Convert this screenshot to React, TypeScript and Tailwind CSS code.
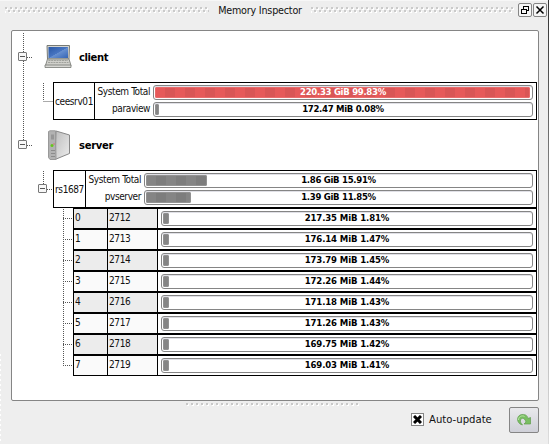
import React from "react";

const ranks = [
  { pid: 2712, usage: "217.35 MiB 1.81%" },
  { pid: 2713, usage: "176.14 MiB 1.47%" },
  { pid: 2714, usage: "173.79 MiB 1.45%" },
  { pid: 2715, usage: "172.26 MiB 1.44%" },
  { pid: 2716, usage: "171.18 MiB 1.43%" },
  { pid: 2717, usage: "171.26 MiB 1.43%" },
  { pid: 2718, usage: "169.75 MiB 1.42%" },
  { pid: 2719, usage: "169.03 MiB 1.41%" },
];

function Meter({ text, fill, red = false, host = false }: { text: string; fill: number; red?: boolean; host?: boolean }) {
  return (
    <div className="relative flex h-[15px] min-w-0 flex-1 items-center rounded-[3px] border border-[#858585] bg-white p-px shadow-[inset_0_1px_0_#e0e0e6]">
      <div
        className={`h-[11px] shrink-0 rounded-[2px] ${
          red
            ? "bg-[repeating-linear-gradient(90deg,#e65a5a_0_10px,#d95656_10px_20px)] shadow-[inset_0_0_0_1px_#e86b6b]"
            : "bg-[repeating-linear-gradient(90deg,#858585_0_10px,#7d7d7d_10px_20px)] shadow-[inset_0_0_0_1px_#929292]"
        }`}
        style={{ width: fill }}
      />
      <span
        className={`absolute inset-0 text-center font-['DejaVu_Sans_Condensed','DejaVu_Sans',sans-serif] text-[9.5px] leading-[12px] font-bold [font-stretch:condensed] ${
          host ? "tracking-[-0.3px]" : "tracking-[-0.12px]"
        } ${red ? "text-white" : "text-black"}`}
      >
        {text}
      </span>
    </div>
  );
}

function HostBox({ name, nameWidth, labelWidth, rows }: {
  name: string;
  nameWidth: string;
  labelWidth: string;
  rows: { label: string; text: string; fill: number; red?: boolean }[];
}) {
  return (
    <div className="ml-[41px] flex h-[38px] w-[484px] border border-black bg-white">
      <div className={`flex shrink-0 items-center justify-center border-r border-black ${nameWidth}`}>{name}</div>
      <div className="flex min-w-0 flex-1 flex-col gap-[2px] pt-[2px] pr-[3px]">
        {rows.map((r) => (
          <div key={r.label} className="flex h-[15px]">
            <div className={`shrink-0 pr-[3px] text-right leading-[14px] whitespace-nowrap ${labelWidth}`}>{r.label}</div>
            <Meter text={r.text} fill={r.fill} red={r.red} host />
          </div>
        ))}
      </div>
    </div>
  );
}

function Grip({ id, width }: { id: string; width: number }) {
  return (
    <svg width={width} height="6" shapeRendering="crispEdges">
      <defs>
        <pattern id={id} width="5" height="6" patternUnits="userSpaceOnUse">
          <path d="M1 1h2v2h-2zM4 4h1v2h-1zM0 4h1v2h-1z" fill="#fff" />
          <path d="M0 0h2v2h-2zM3 3h2v2h-2z" fill="#cacaca" />
        </pattern>
      </defs>
      <rect width={width} height="6" fill={`url(#${id})`} />
    </svg>
  );
}

function Expander({ x, y }: { x: number; y: number }) {
  return (
    <g>
      <rect x={x + 0.5} y={y + 0.5} width="8" height="8" rx="0.5" fill="#f7f7f7" stroke="#777" />
      <path d={`M${x + 2} ${y + 4.5}h5`} stroke="#555" />
    </g>
  );
}

// Dotted branches and fold boxes, in panel coordinates
function Branches() {
  return (
    <svg className="pointer-events-none absolute top-0 left-0" width="64" height="369">
      <g stroke="#555" strokeDasharray="1 1" fill="none">
        <path d="M11.5 2v107M15 26.5h6M15 114.5h6" />
        <path d="M31.5 52v18M31.5 70.5h10M31.5 140v13M35 158.5h6" />
        <path d="M51.5 178v157" />
        {ranks.map((r, i) => (
          <path key={r.pid} d={`M51 ${187.5 + i * 21}h10`} />
        ))}
      </g>
      <Expander x={6} y={21} />
      <Expander x={6} y={109} />
      <Expander x={26} y={153} />
    </svg>
  );
}

function Laptop() {
  return (
    <svg width="28" height="25" viewBox="0 0 28 25">
      <defs>
        <linearGradient id="screen" x1="0" y1="0" x2="1" y2="1">
          <stop offset="0" stopColor="#2957a5" />
          <stop offset=".5" stopColor="#4775c2" />
          <stop offset=".52" stopColor="#6790d0" />
          <stop offset="1" stopColor="#3565b5" />
        </linearGradient>
      </defs>
      <path d="M3 1.5h22.500l-.5 13.500H3.500z" fill="#d5d5d0" stroke="#777a75" />
      <path d="M4.500 3h19.500v11H4.500z" fill="url(#screen)" />
      <path d="M3.500 15h21.500l2 6.500H1.500z" fill="#d0d0cb" stroke="#888a85" />
      <path d="M4.500 16.500h19.500M4 18.500h20.500" stroke="#a0a29d" strokeDasharray="2 .7" />
      <path d="M1 21h26v2.500H1z" fill="#d8d8d4" stroke="#777a75" strokeWidth=".8" />
    </svg>
  );
}

function Tower() {
  return (
    <svg width="24" height="31" viewBox="0 0 24 31">
      <defs>
        <linearGradient id="side" x1="0" y1="0" x2="1" y2="1">
          <stop offset="0" stopColor="#bdbdbd" />
          <stop offset="1" stopColor="#ededed" />
        </linearGradient>
      </defs>
      <path d="M9 1 22.500 5v18.500L8 29.500z" fill="url(#side)" stroke="#888" />
      <path d="M1.500 1.500 3 .8h5.500L9 29.500H3l-1.500-2z" fill="#b2b2b2" stroke="#999" />
      <path d="M4 4.500h3v5H4z" fill="#969696" />
      <path d="M4 20.500h4M4 23.500h4M4 26.500h4" stroke="#8b8b8b" />
      <circle cx="5" cy="15.500" r="1.500" fill="#66c51b" />
      <path d="M7 13v2" stroke="#d66" strokeWidth=".8" />
    </svg>
  );
}

const titleButton =
  "flex h-[14px] w-[14px] items-center justify-center rounded-[2px] border border-[#858585] bg-[#f5f5f5]";

export default function App() {
  return (
    <div className="relative flex h-[444px] w-[549px] flex-col overflow-hidden bg-[#eeeeee] font-['DejaVu_Sans_Condensed','DejaVu_Sans',sans-serif] text-[10px] tracking-[-0.4px] text-[#111] [font-stretch:condensed]">
      <div className="flex h-[30px] shrink-0 items-start border-t border-[#f7f7f7] pl-[5px]">
        <div className="pt-[6px]"><Grip id="gripLeft" width={204} /></div>
        <div className="w-[102px] pt-[2px] text-center font-['DejaVu_Sans',sans-serif] text-[9.6px] tracking-[-0.2px] leading-[15px] whitespace-nowrap [font-stretch:normal]">
          Memory Inspector
        </div>
        <div className="pt-[6px]"><Grip id="gripRight" width={203} /></div>
        <div className="flex gap-px pt-[2px] pl-[4px]">
          <button className={titleButton}>
            <svg width="12" height="12" viewBox="0 0 12 12" className="shrink-0" fill="none" stroke="#000" shapeRendering="crispEdges">
              <path d="M4.500 5V2.500h5v4H8M4 2h6M2.500 5.500h5v4h-5zM2 5h6" />
            </svg>
          </button>
          <button className={titleButton}>
            <svg width="10" height="10" viewBox="0 0 10 10" stroke="#000" strokeWidth="1.500">
              <path d="M1.500 1.500l7 7M8.500 1.500l-7 7" />
            </svg>
          </button>
        </div>
      </div>

      <div className="relative ml-[11px] h-[371px] w-[528px] shrink-0 rounded-[2px] border border-[#858585] bg-white">
        <Branches />
        <div className="flex h-[51px] items-center pl-[32px]">
          <Laptop />
          <span className="mt-px ml-[7px] font-['DejaVu_Sans',sans-serif] text-[10px] tracking-[-0.4px] font-bold text-black [font-stretch:normal]">client</span>
        </div>
        <HostBox
          name="ceesrv01"
          nameWidth="w-[41px]"
          labelWidth="w-[58px]"
          rows={[
            { label: "System Total", text: "220.33 GiB 99.83%", fill: 375, red: true },
            { label: "paraview", text: "172.47 MiB 0.08%", fill: 4 },
          ]}
        />
        <div className="flex h-[50px] items-center pl-[35px]">
          <Tower />
          <span className="ml-[8px] font-['DejaVu_Sans',sans-serif] text-[10px] tracking-[-0.3px] font-bold text-black [font-stretch:normal]">server</span>
        </div>
        <HostBox
          name="rs1687"
          nameWidth="w-[32px]"
          labelWidth="w-[58px]"
          rows={[
            { label: "System Total", text: "1.86 GiB 15.91%", fill: 61 },
            { label: "pvserver", text: "1.39 GiB 11.85%", fill: 45 },
          ]}
        />
        {ranks.map((r, i) => (
          <div key={r.pid} className="ml-[61px] flex h-[21px] w-[464px] border border-black">
            <div className={`w-[34px] border-r border-black pl-px leading-[18px] ${i % 2 ? "bg-[#fafafa]" : "bg-[#ececec]"}`}>{i}</div>
            <div className={`w-[50px] border-r border-black pl-px leading-[18px] ${i % 2 ? "bg-[#fafafa]" : "bg-[#ececec]"}`}>{r.pid}</div>
            <div className="flex flex-1 pt-[2px] pr-[3px] pl-[3px]">
              <Meter text={r.usage} fill={6} />
            </div>
          </div>
        ))}
      </div>

      <div className="flex h-[6px] shrink-0 pt-[2px] pl-[186px]">
        <svg width="174" height="3" shapeRendering="crispEdges">
          <path d="M1 2h173" stroke="#fff" strokeWidth="2" strokeDasharray="2 3" />
          <path d="M0 1h174" stroke="#c8c8c8" strokeWidth="2" strokeDasharray="2 3" />
        </svg>
      </div>
      <div className="flex h-[26px] items-center justify-end pr-[10px]">
        <span className="mr-[5px] mb-px flex h-[13px] w-[13px] items-center justify-center border border-[#858585] bg-white">
          <svg width="9" height="9" viewBox="0 0 9 9" stroke="#000" strokeWidth="3">
            <path d="M1 1l7 7M8 1l-7 7" />
          </svg>
        </span>
        <span className="w-[80px] font-['DejaVu_Sans',sans-serif] text-[10.1px] tracking-normal [font-stretch:normal]">Auto-update</span>
        <button className="flex h-[26px] w-[30px] items-center justify-center rounded-[2px] border border-[#858585] bg-linear-to-b from-[#e9e9ec] to-[#cfd0d8]">
          <svg width="16" height="14" viewBox="0 0 16 14">
            <path d="M6.500 12C0 10.500 0 2 6 1.500c4-.3 5.500 1.500 6 4l2.500-1v6.500H8L10 9C9 5 5.500 4 4.500 7c-.3 2 .5 3.500 2 5z" fill="#79bf62" stroke="#619c4f" strokeWidth=".7" />
            <path d="M2.500 7C2.500 3.500 6 2 8.500 3.500" fill="none" stroke="#b9e5a6" />
          </svg>
        </button>
      </div>
      <div className="absolute top-0 right-0 h-full w-px bg-linear-to-b from-[#333] via-[#999] to-[#ddd]" />
      <div className="absolute top-[354px] left-0 h-[88px] w-px bg-[repeating-linear-gradient(180deg,#fff_0_2px,transparent_2px_5px)]" />
    </div>
  );
}
